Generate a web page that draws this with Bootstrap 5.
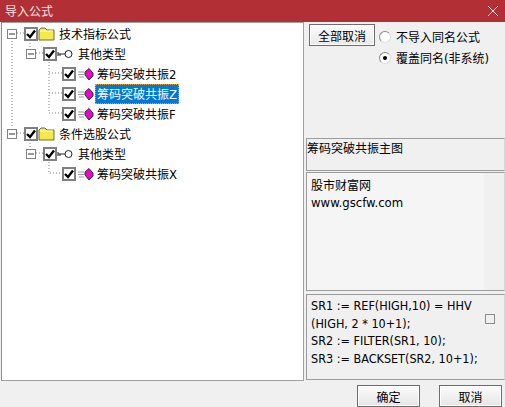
<!DOCTYPE html>
<html lang="zh">
<head>
<meta charset="utf-8">
<title>导入公式</title>
<link href="https://cdn.jsdelivr.net/npm/bootstrap@5.3.0/dist/css/bootstrap.min.css" rel="stylesheet">
<style>
html,body{height:100%;margin:0}
body{background:#f0f0f0;font-family:"Noto Sans CJK SC",sans-serif;font-size:12px;color:#000;overflow:hidden}
.lat{font-family:"DejaVu Sans Condensed","Noto Sans",sans-serif;font-size:13px}
.dlg{width:505px;height:407px}
.titlebar{height:22px;background:#b23035;color:#f4e4e4;padding-left:5px;font-size:12px;line-height:20px}
.closex{width:10px;height:10px;margin-right:7px}
.mainrow{height:359px;padding-left:1px}
.treepane{width:303px;background:#fff;border:1px solid #a0a0a0;border-left-color:#8c8c8c;padding-top:1px}
.wires{position:absolute;left:0;top:0;width:301px;height:200px}
.wires path{fill:none;stroke:#808080;stroke-width:1;stroke-dasharray:1 2}
.trow{height:20px;position:relative}
.lv0{padding-left:5px}
.lv1{padding-left:24px}
.lv2{padding-left:60px}
.expbox{width:10px;height:10px;border:1px solid #808080;background:#fff;margin-right:7px;flex:none;position:relative}
.expbox::after{content:"";position:absolute;left:1px;right:1px;top:3px;height:2px;background:#333;transform:scaleY(.5)}
.chk{width:14px;height:14px;border:2px solid #808080;background:#fff;flex:none}
.chk svg{display:block;width:10px;height:10px}
.tlabel{white-space:nowrap;line-height:18px}
.lbl0{margin-left:4px}
.lbl1{margin-left:5px}
.lbl2{margin-left:2px;padding:0 1px}
.sel{background:#0078d7;color:#fff;outline:1px dotted #e8a030;outline-offset:-1px;height:20px;line-height:20px;padding:0 2px;margin-left:1px}
.rightpane{width:201px;padding-left:2px}
.toparea{height:115px;padding:2px 0 0 3px}
.allbtn{width:66px;height:22px;border:1px solid #6d6d6d;background:linear-gradient(#fbfbfb,#e9e9e9);font-size:12px;padding:0;line-height:19px;box-shadow:inset 0 0 0 1px #fff;border-radius:0;color:#000}
.radios{margin-left:4px;padding-top:2px}
.radioln{height:21px;line-height:21px;white-space:nowrap}
.rdot{width:12px;height:12px;border-radius:50%;border:1px solid #8a8a8a;border-right-color:#ddd;border-bottom-color:#ddd;background:#fff;margin-right:5px;flex:none;position:relative}
.rdot.on::after{content:"";position:absolute;left:3px;top:3px;width:4px;height:4px;border-radius:50%;background:#000}
.infobox{border:1px solid #9c9c9c;border-right-color:#d8d8d8;background:#f0f0f0}
.namebox{height:33px;margin-top:1px;line-height:17px}
.descbox{height:119px;margin-top:1px;padding:3px 0 0 4px;line-height:17px;background:linear-gradient(90deg,#f5f5f5 177px,#f0f0f0 177px)}
.codebox{height:86px;margin-top:3px;padding:2px 2px 0 4px;line-height:17.5px;position:relative}
.codetext{width:167px;white-space:nowrap;font-size:12.5px}
.codechk{width:10px;height:10px;border:1px solid #8c8c8c;background:#f0f0f0;margin-left:7px;margin-top:17px;flex:none}
.footrow{height:26px;padding-right:3px;padding-top:4px;gap:19px}
.okbtn{width:63px;height:22px;border:1px solid #6d6d6d;background:linear-gradient(#fbfbfb,#e6e6e6);font-size:12px;padding:0;line-height:19px;border-radius:0;box-shadow:inset 0 0 0 1px #fff;color:#000}
</style>
</head>
<body>
<div class="dlg d-flex flex-column">
  <div class="titlebar d-flex align-items-center justify-content-between">
    <span>导入公式</span>
    <svg class="closex" viewBox="0 0 10 10"><path d="M0 0L10 10M10 0L0 10" stroke="#f3d6d7" stroke-width="1"/></svg>
  </div>
  <div class="mainrow d-flex">
    <div class="treepane position-relative">
      <svg class="wires" viewBox="0 0 301 200">
        <path d="M10 15V105"/><path d="M15 10H22"/><path d="M28 20V27"/><path d="M34 30H41"/>
        <path d="M47 39V90"/><path d="M47 50H60"/><path d="M47 70H60"/><path d="M47 90H60"/>
        <path d="M15 110H22"/><path d="M28 120V127"/><path d="M34 130H41"/><path d="M47 139V150H60"/>
      </svg>
      <div class="trow lv0 d-flex align-items-center">
        <span class="expbox"></span>
        <span class="chk"><svg viewBox="0 0 10 10"><path d="M1 5L4 8L9 1.500" fill="none" stroke="#000" stroke-width="2.400"/></svg></span>
        <svg width="17" height="14" viewBox="0 0 17 14"><path d="M1 3L3 1H7L9 3H16V13H1Z" fill="#f5e84a" stroke="#6e6e40"/><path d="M2 4H15" stroke="#fffbd0"/></svg>
        <span class="tlabel lbl0">技术指标公式</span>
      </div>
      <div class="trow lv1 d-flex align-items-center">
        <span class="expbox"></span>
        <span class="chk"><svg viewBox="0 0 10 10"><path d="M1 5L4 8L9 1.500" fill="none" stroke="#000" stroke-width="2.400"/></svg></span>
        <svg width="16" height="10" viewBox="0 0 16 10"><path d="M1 3V7M1 5H8M3 5V7" stroke="#222" fill="none"/><circle cx="11.500" cy="5" r="3.500" fill="#fff" stroke="#222"/></svg>
        <span class="tlabel lbl1">其他类型</span>
      </div>
      <div class="trow lv2 d-flex align-items-center">
        <span class="chk"><svg viewBox="0 0 10 10"><path d="M1 5L4 8L9 1.500" fill="none" stroke="#000" stroke-width="2.400"/></svg></span>
        <svg width="18" height="14" viewBox="0 0 18 14"><path d="M2 5H8M2 7.500H8M3 10H8" stroke="#999"/><path d="M13 1.500L17 6V9L13 13L9 8V5Z" fill="#f000d0" stroke="#333"/></svg>
        <span class="tlabel lbl2">筹码突破共振<span class="lat">2</span></span>
      </div>
      <div class="trow lv2 d-flex align-items-center">
        <span class="chk"><svg viewBox="0 0 10 10"><path d="M1 5L4 8L9 1.500" fill="none" stroke="#000" stroke-width="2.400"/></svg></span>
        <svg width="18" height="14" viewBox="0 0 18 14"><path d="M2 5H8M2 7.500H8M3 10H8" stroke="#999"/><path d="M13 1.500L17 6V9L13 13L9 8V5Z" fill="#f000d0" stroke="#333"/></svg>
        <span class="tlabel sel">筹码突破共振<span class="lat">Z</span></span>
      </div>
      <div class="trow lv2 d-flex align-items-center">
        <span class="chk"><svg viewBox="0 0 10 10"><path d="M1 5L4 8L9 1.500" fill="none" stroke="#000" stroke-width="2.400"/></svg></span>
        <svg width="18" height="14" viewBox="0 0 18 14"><path d="M2 5H8M2 7.500H8M3 10H8" stroke="#999"/><path d="M13 1.500L17 6V9L13 13L9 8V5Z" fill="#f000d0" stroke="#333"/></svg>
        <span class="tlabel lbl2">筹码突破共振<span class="lat">F</span></span>
      </div>
      <div class="trow lv0 d-flex align-items-center">
        <span class="expbox"></span>
        <span class="chk"><svg viewBox="0 0 10 10"><path d="M1 5L4 8L9 1.500" fill="none" stroke="#000" stroke-width="2.400"/></svg></span>
        <svg width="17" height="14" viewBox="0 0 17 14"><path d="M1 3L3 1H7L9 3H16V13H1Z" fill="#f5e84a" stroke="#6e6e40"/><path d="M2 4H15" stroke="#fffbd0"/></svg>
        <span class="tlabel lbl0">条件选股公式</span>
      </div>
      <div class="trow lv1 d-flex align-items-center">
        <span class="expbox"></span>
        <span class="chk"><svg viewBox="0 0 10 10"><path d="M1 5L4 8L9 1.500" fill="none" stroke="#000" stroke-width="2.400"/></svg></span>
        <svg width="16" height="10" viewBox="0 0 16 10"><path d="M1 3V7M1 5H8M3 5V7" stroke="#222" fill="none"/><circle cx="11.500" cy="5" r="3.500" fill="#fff" stroke="#222"/></svg>
        <span class="tlabel lbl1">其他类型</span>
      </div>
      <div class="trow lv2 d-flex align-items-center">
        <span class="chk"><svg viewBox="0 0 10 10"><path d="M1 5L4 8L9 1.500" fill="none" stroke="#000" stroke-width="2.400"/></svg></span>
        <svg width="18" height="14" viewBox="0 0 18 14"><path d="M2 5H8M2 7.500H8M3 10H8" stroke="#999"/><path d="M13 1.500L17 6V9L13 13L9 8V5Z" fill="#f000d0" stroke="#333"/></svg>
        <span class="tlabel lbl2">筹码突破共振<span class="lat">X</span></span>
      </div>
    </div>
    <div class="rightpane d-flex flex-column">
      <div class="toparea d-flex">
        <button type="button" class="btn allbtn">全部取消</button>
        <div class="radios">
          <div class="radioln d-flex align-items-center"><span class="rdot"></span>不导入同名公式</div>
          <div class="radioln d-flex align-items-center"><span class="rdot on"></span><span>覆盖同名<span class="lat">(</span>非系统<span class="lat">)</span></span></div>
        </div>
      </div>
      <div class="infobox namebox">筹码突破共振主图</div>
      <div class="infobox descbox">股市财富网<br><span class="lat">www.gscfw.com</span></div>
      <div class="infobox codebox d-flex">
        <div class="codetext lat">SR1 := REF(HIGH,10) = HHV<br>(HIGH, 2 * 10+1);<br>SR2 := FILTER(SR1, 10);<br>SR3 := BACKSET(SR2, 10+1);</div>
        <span class="codechk"></span>
      </div>
    </div>
  </div>
  <div class="footrow d-flex justify-content-end">
    <button type="button" class="btn okbtn">确定</button>
    <button type="button" class="btn okbtn">取消</button>
  </div>
</div>
<script src="https://cdn.jsdelivr.net/npm/bootstrap@5.3.0/dist/js/bootstrap.bundle.min.js"></script>
</body>
</html>
